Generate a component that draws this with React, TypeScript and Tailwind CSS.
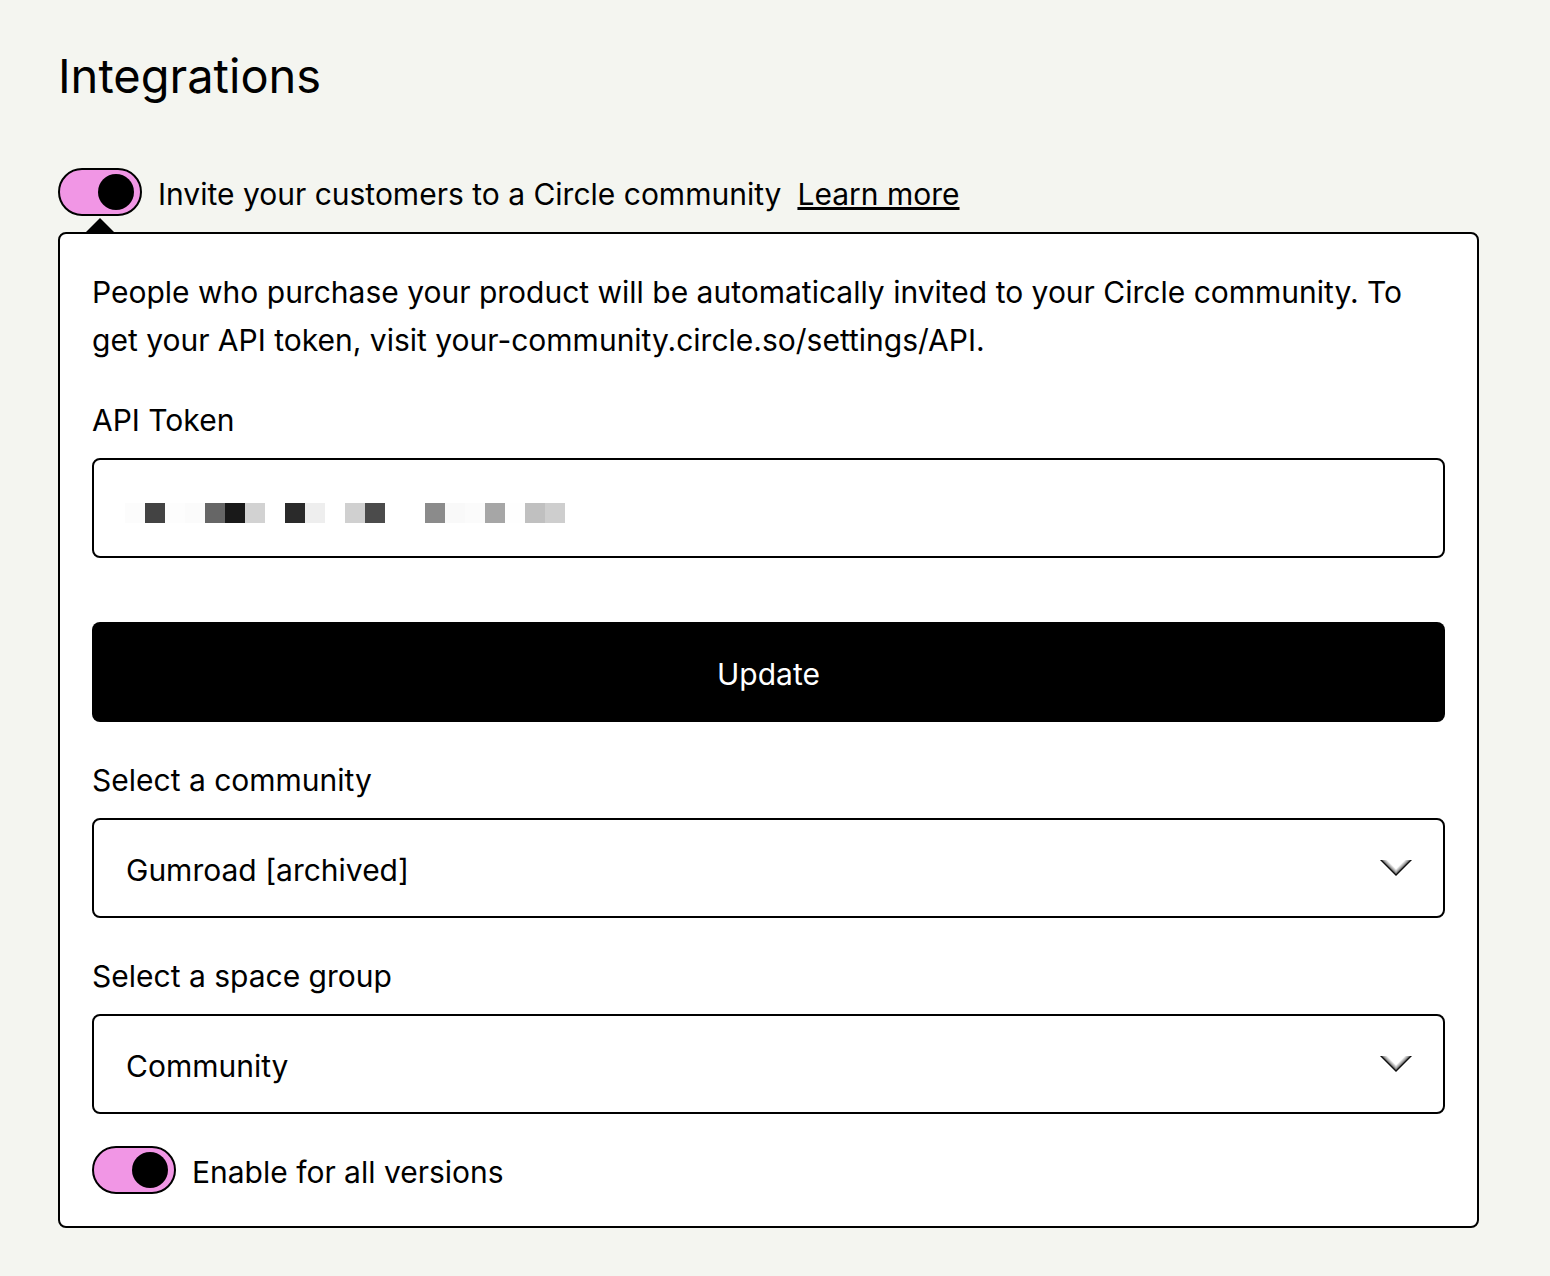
import React, { useState } from "react";

const TOKEN_CELLS = [
  "#fcfcfc", "#434343", "#fdfdfd", "#fbfbfb", "#666666", "#191919", "#d2d2d2", "#ffffff",
  "#2a2a2a", "#eeeeee", "#ffffff", "#d0d0d0", "#4b4b4b", "#ffffff", "#ffffff", "#8b8b8b",
  "#f9f9f9", "#fbfbfb", "#a6a6a6", "#fefefe", "#c0c0c0", "#cecece",
];

function Toggle({ id, label }: { id: string; label: string }) {
  const [on, setOn] = useState(true);
  return (
    <div className="flex items-center gap-4">
      <input
        id={id}
        type="checkbox"
        role="switch"
        checked={on}
        onChange={(e) => setOn(e.target.checked)}
        className="flex h-12 w-[84px] shrink-0 cursor-pointer appearance-none items-center rounded-full border-2 border-black bg-white px-1.5 before:size-9 before:rounded-full before:bg-black checked:justify-end checked:bg-[#f196e5]"
      />
      <label htmlFor={id} className="pt-1 leading-11">
        {label}
      </label>
    </div>
  );
}

function Chevron() {
  return (
    <svg viewBox="0 0 32 16" className="pointer-events-none absolute top-[42px] right-[33px] h-4 w-8" aria-hidden="true">
      <defs>
        <linearGradient id="chev-left" gradientUnits="userSpaceOnUse" x1="8" y1="8" x2="12" y2="4">
          <stop offset="0.1" stopColor="#000" />
          <stop offset="0.4" stopColor="#000" stopOpacity="0.4" />
          <stop offset="0.9" stopColor="#000" stopOpacity="0" />
        </linearGradient>
        <linearGradient id="chev-right" gradientUnits="userSpaceOnUse" x1="24" y1="8" x2="20" y2="4">
          <stop offset="0.1" stopColor="#000" />
          <stop offset="0.4" stopColor="#000" stopOpacity="0.4" />
          <stop offset="0.9" stopColor="#000" stopOpacity="0" />
        </linearGradient>
      </defs>
      <path d="M0 0L16 16V0Z" fill="url(#chev-left)" />
      <path d="M32 0L16 16V0Z" fill="url(#chev-right)" />
    </svg>
  );
}

function SelectField({ id, label, options }: { id: string; label: string; options: string[] }) {
  return (
    <div className="flex flex-col gap-3.5 pt-0.5">
      <label htmlFor={id}>{label}</label>
      <div className="relative">
        <select
          id={id}
          className="block h-[100px] w-full appearance-none rounded-lg border-2 border-black bg-white px-8 pt-1"
        >
          {options.map((o) => (
            <option key={o}>{o}</option>
          ))}
        </select>
        <Chevron />
      </div>
    </div>
  );
}

export default function App() {
  return (
    <main className="min-h-screen bg-[#f4f5f0] pt-11 pr-[71px] pb-12 pl-[58px] font-['Inter',sans-serif] text-[30px] leading-[48px] text-black">
      <h1 className="text-[47px] leading-[64px]">Integrations</h1>

      <div className="mt-[60px] flex items-center gap-4">
        <Toggle id="circle" label="Invite your customers to a Circle community" />
        <a href="#learn-more" className="pt-1 leading-11 underline decoration-[3px] underline-offset-2">
          Learn more
        </a>
      </div>

      <section className="relative mt-4 flex flex-col gap-8 rounded-lg border-2 border-black bg-white p-8 before:absolute before:-top-4 before:left-[26px] before:border-x-[14px] before:border-b-[14px] before:border-x-transparent before:border-b-black">
        <p className="-mb-0.5 pt-0.5">
          People who purchase your product will be automatically invited to your Circle community. To
          get your API token, visit your-community.circle.so/settings/API.
        </p>

        <div className="flex flex-col gap-3.5 pt-0.5">
          <label htmlFor="token">API Token</label>
          <div className="relative">
            <input
              id="token"
              type="text"
              className="block h-[100px] w-full rounded-lg border-2 border-black bg-white px-8"
            />
            <div className="pointer-events-none absolute top-[45px] left-[33px] flex" aria-hidden="true">
              {TOKEN_CELLS.map((c, i) => (
                <span key={i} className="size-5" style={{ backgroundColor: c }} />
              ))}
            </div>
          </div>
        </div>

        <button type="button" className="mt-8 h-[100px] w-full rounded-lg bg-black pt-1 text-white">
          Update
        </button>

        <SelectField id="community" label="Select a community" options={["Gumroad [archived]"]} />
        <SelectField id="space-group" label="Select a space group" options={["Community"]} />

        <Toggle id="versions" label="Enable for all versions" />
      </section>
    </main>
  );
}
